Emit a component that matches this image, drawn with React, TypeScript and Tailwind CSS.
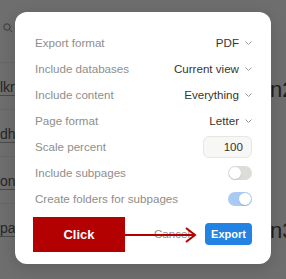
import React from "react";

const rows = [
  { label: "Export format", value: "PDF" },
  { label: "Include databases", value: "Current view" },
  { label: "Include content", value: "Everything" },
  { label: "Page format", value: "Letter" },
];

const Chevron = () => (
  <svg width="7" height="4" viewBox="0 0 7 4" className="ml-[6px]">
    <path d="M0.5 0.5 L3.5 3.5 L6.5 0.5" fill="none" stroke="#9b9a97" strokeWidth="1" />
  </svg>
);

const Toggle = ({ on }: { on?: boolean }) => (
  <div
    className={
      on
        ? "flex h-[14px] w-[24px] items-center justify-end rounded-full bg-[#a9cbf1] px-[1px]"
        : "flex h-[14px] w-[24px] items-center justify-start rounded-full bg-[#dcdcd9] px-[1px]"
    }
  >
    <div className="h-[12px] w-[12px] rounded-full bg-white shadow-[0_1px_1px_rgba(0,0,0,0.12)]" />
  </div>
);

const App = () => {
  return (
    <div className="relative h-[279px] w-[286px] overflow-hidden bg-[#6e6e6e] font-['Liberation_Sans',Arial,sans-serif]">
      {/* page behind the modal */}
      <div className="flex h-full">
        <div className="w-[140px]">
          <div className="h-[62px] pl-[3px] pt-[23px]">
            <svg width="10" height="10" viewBox="0 0 10 10">
              <circle cx="4" cy="4" r="3.2" fill="none" stroke="#3a3a3a" strokeWidth="1" />
              <path d="M6.4 6.4 L9.3 9.3" stroke="#3a3a3a" strokeWidth="1" />
            </svg>
          </div>
          {["lknote", "dhuri", "onest", "pakal"].map((t) => (
            <div
              key={t}
              className="flex h-[47px] items-center border-t border-[#676767] pt-[3px] text-[14px] text-[#262626]"
            >
              <span className="underline decoration-[#4a4a4a] underline-offset-[3px]">{t}</span>
            </div>
          ))}
        </div>
        <div className="flex-1 overflow-hidden">
          <div className="whitespace-nowrap pl-[130px] pt-[73px] text-[22px] text-[#1f1f1f]">n2</div>
          <div className="whitespace-nowrap pl-[130px] pt-[108px] text-[22px] text-[#1f1f1f]">n3</div>
        </div>
      </div>

      {/* export dialog */}
      <div className="absolute left-[15px] top-[12px] h-[252px] w-[256px] rounded-[12px] bg-white pl-[20px] pr-[19px] pt-[18px] text-[11.6px] shadow-[0_4px_16px_rgba(0,0,0,0.15)]">
        {rows.map((r) => (
          <div key={r.label} className="flex h-[26px] items-center justify-between">
            <span className="text-[#8e8e8b]">{r.label}</span>
            <span className="flex items-center text-[#37352f]">
              {r.value}
              <Chevron />
            </span>
          </div>
        ))}
        <div className="flex h-[26px] items-center justify-between">
          <span className="text-[#8e8e8b]">Scale percent</span>
          <div className="flex h-[22px] w-[49px] items-center justify-end rounded-[6px] border border-[#e6e6e3] bg-[#f7f7f5] pr-[8px] text-[#37352f]">
            100
          </div>
        </div>
        <div className="flex h-[26px] items-center justify-between">
          <span className="text-[#8e8e8b]">Include subpages</span>
          <Toggle />
        </div>
        <div className="flex h-[26px] items-center justify-between">
          <span className="text-[#8e8e8b]">Create folders for subpages</span>
          <Toggle on />
        </div>
        <div className="mt-[11px] flex items-center justify-end gap-[15px]">
          <span className="text-[#8e8e8b]">Cancel</span>
          <button className="flex h-[22px] w-[47px] items-center justify-center rounded-[4px] bg-[#2383e2] text-[11px] font-bold text-white">
            Export
          </button>
        </div>
      </div>

      {/* annotation */}
      <div className="absolute left-[33px] top-[217px] flex h-[35px] w-[92px] items-center justify-center bg-[#b30000] text-[13px] font-bold text-white">
        Click
      </div>
      <svg className="absolute left-[125px] top-[226px]" width="72" height="18" viewBox="0 0 72 18">
        <path d="M0 9 L70 9" stroke="#b30000" strokeWidth="2" />
        <path d="M61 2 L70 9 L61 16" fill="none" stroke="#b30000" strokeWidth="2" />
      </svg>
    </div>
  );
};

export default App;
